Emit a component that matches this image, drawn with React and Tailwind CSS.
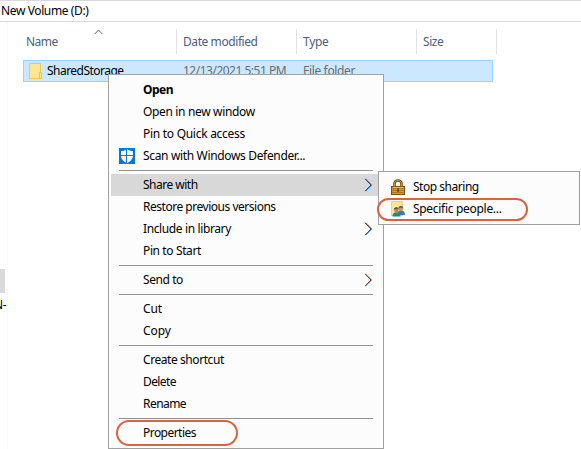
import React from "react";

function Chevron({ left, right }) {
  return (
    <svg width="9" height="14" viewBox="0 0 9 14" fill="none" strokeWidth="1">
      <path d="M2 0.8 L8 7 L2 13.2" stroke={right} />
      <path d="M1 0.8 L7 7 L1 13.2" stroke={left} />
    </svg>
  );
}

function Defender() {
  return (
    <svg width="16" height="16" viewBox="0 0 16 16">
      <rect width="16" height="16" fill="#0078d7" />
      <path d="M8 1 C6.4 2.4 4.4 3 2 3 V7.5 C2 11 4.6 13.6 8 15.2 C11.4 13.6 14 11 14 7.5 V3 C11.6 3 9.6 2.4 8 1Z" fill="#fff" />
      <path d="M7.5 1 V15.2 M2 7.5 H14" stroke="#0078d7" strokeWidth="1" />
    </svg>
  );
}

function Lock() {
  return (
    <svg width="14" height="16" viewBox="0 0 14 16">
      <path d="M3.5 8 V4.5 C3.5 0.4 10.5 0.4 10.5 4.5 V8" fill="none" stroke="#7a4a12" strokeWidth="2.6" />
      <path d="M3.5 8 V4.5 C3.5 0.6 10.5 0.6 10.5 4.5 V8" fill="none" stroke="#c99343" strokeWidth="1" />
      <rect x="0.5" y="7.5" width="13" height="8" fill="#d99b2b" stroke="#80500f" />
      <path d="M1 9.5 H13 M1 11.5 H13 M1 13.5 H13" stroke="#a26c18" strokeWidth="0.8" />
      <path d="M2 8.5 H12" stroke="#f5cf72" strokeWidth="0.8" />
      <path d="M7 9.3 V13" stroke="#5c390b" strokeWidth="1.4" />
    </svg>
  );
}

function People() {
  return (
    <svg width="14" height="16" viewBox="0 0 14 16">
      <rect x="0.5" y="0.5" width="11" height="14" fill="#fbe59a" stroke="#eed476" />
      <path d="M6.5 14 C6.5 10.8 7.5 9.6 9.8 9.6 C12.5 9.6 14 10.8 14 14Z" fill="#3f77ab" />
      <circle cx="10" cy="7.6" r="2.2" fill="#c49468" />
      <path d="M7.6 7.2 C7.4 4.4 12.5 4.4 12.4 7.2 L11.4 6.6 H9Z" fill="#4b4a45" />
      <path d="M1.5 15.5 C1.5 12.4 3 11.2 5.3 11.2 C8 11.2 9.5 12.4 9.5 15.5Z" fill="#328575" />
      <circle cx="5.3" cy="9" r="2.3" fill="#b8875e" />
      <path d="M2.8 8.8 C2.4 5.6 8.1 5.4 7.9 8.8 L6.8 7.8 H4Z" fill="#4a4238" />
    </svg>
  );
}

function Folder() {
  return (
    <svg width="14" height="17" viewBox="0 0 14 17">
      <rect x="0.5" y="0.5" width="11" height="15" fill="#ffe694" stroke="#edca58" />
      <path d="M10.5 9.5 H12.5 V15.5 H10.5Z" fill="#ffe694" stroke="#e9c24c" />
    </svg>
  );
}

function Item({ children, icon, arrow, active, className = "" }) {
  return (
    <div className={`ml-[2px] mr-px flex h-[22px] items-center ${active ? "bg-[#d8d8d8]" : ""}`}>
      <div className="ml-2 w-6 shrink-0">{icon}</div>
      <span className={`grow ${className}`}>{children}</span>
      {arrow && <div className="mr-[9px]">{arrow}</div>}
    </div>
  );
}

function Separator() {
  return <div className="my-[3px] ml-[10px] mr-[10px] h-px bg-[#919191]" />;
}

const blue = <Chevron left="#5a3a22" right="#3f96ea" />;
const brown = <Chevron left="#7a3c10" right="#7fb4de" />;

function ContextMenu() {
  return (
    <div className="absolute left-[108px] top-[74px] h-[375px] w-[276px] border border-[#a0a0a0] bg-[#fcfcfc] py-1">
      <Item className="font-bold tracking-[-0.5px]">Open</Item>
      <Item className="tracking-[-0.34px]">Open in new window</Item>
      <Item className="tracking-[-0.28px]">Pin to Quick access</Item>
      <Item className="tracking-[-0.34px]" icon={<Defender />}>Scan with Windows Defender...</Item>
      <Separator />
      <Item className="tracking-[-0.5px]" active arrow={blue}>Share with</Item>
      <Item className="tracking-[-0.48px]">Restore previous versions</Item>
      <Item className="tracking-[-0.38px]" arrow={blue}>Include in library</Item>
      <Item className="tracking-[-0.38px]">Pin to Start</Item>
      <Separator />
      <Item className="tracking-[-0.42px]" arrow={brown}>Send to</Item>
      <Separator />
      <Item className="tracking-[-0.1px]">Cut</Item>
      <Item className="tracking-[-0.1px]">Copy</Item>
      <Separator />
      <Item className="tracking-[-0.43px]">Create shortcut</Item>
      <Item className="tracking-[-0.6px]">Delete</Item>
      <Item className="tracking-[-0.55px]">Rename</Item>
      <Separator />
      <Item className="tracking-[-0.54px]">Properties</Item>
      <div className="absolute left-[7px] top-[345px] h-[26px] w-[122px] rounded-[13px] border-2 border-[#d9623f]" />
    </div>
  );
}

function ShareMenu() {
  return (
    <div className="absolute left-[378px] top-[171px] h-[54px] w-[202px] border border-[#a0a0a0] bg-[#fcfcfc] py-1">
      <Item className="tracking-[-0.47px]" icon={<div className="pl-[2px]"><Lock /></div>}>Stop sharing</Item>
      <Item className="tracking-[-0.3px]" icon={<div className="pl-[2px]"><People /></div>}>Specific people...</Item>
      <div className="absolute -left-[2px] top-[26px] h-[23px] w-[151px] rounded-[12px] border-2 border-[#d9623f]" />
    </div>
  );
}

function Column({ label, className }) {
  return <div className={`flex items-center border-r border-[#e0e0e0] pt-px ${className}`}>{label}</div>;
}

export default function App() {
  return (
    <div className="relative flex h-[449px] w-[581px] flex-col overflow-hidden bg-white font-['Noto_Sans','Open_Sans',sans-serif] text-[12px] leading-4 whitespace-nowrap text-black">
      <div className="flex h-[22px] shrink-0 items-center border-y border-[#d9d9d9] pl-px pb-px tracking-[-0.38px]">New Volume (D:)</div>
      <div className="flex grow">
        <div className="w-2 shrink-0 overflow-hidden border-r border-[#f8f8f8] pt-[247px]">
          <div className="h-6 w-[5px] bg-[#d9d9d9]" />
          <div className="-ml-[6px] mt-[4px] tracking-[-0.4px]">N-</div>
        </div>
        <div className="grow">
          <div className="relative mt-[7px] flex h-[25px] text-[#4c607a]">
            <Column label="Name" className="w-[169px] pl-[18px] tracking-[-0.5px]" />
            <Column label="Date modified" className="w-[120px] pl-[6px] tracking-[-0.42px]" />
            <Column label="Type" className="w-[120px] pl-[6px] tracking-[-0.3px]" />
            <Column label="Size" className="w-20 pl-[6px] tracking-[-0.45px]" />
            <svg className="absolute left-[86px] top-0" width="9" height="6" viewBox="0 0 9 6" fill="none" stroke="#686868">
              <path d="M0.7 5 L4.5 1 L8.3 5" />
            </svg>
          </div>
          <div className="ml-[15px] mt-[6px] flex h-[22px] w-[470px] items-center border border-[#99d1ff] bg-[#cce8ff] text-[#6d6d6d]">
            <div className="ml-[5px] w-[18px]"><Folder /></div>
            <span className="w-[136px] tracking-[-0.53px] text-black">SharedStorage</span>
            <span className="w-[120px] tracking-[-0.5px]">12/13/2021 5:51 PM</span>
            <span className="tracking-[-0.34px]">File folder</span>
          </div>
        </div>
      </div>
      <ContextMenu />
      <ShareMenu />
    </div>
  );
}
